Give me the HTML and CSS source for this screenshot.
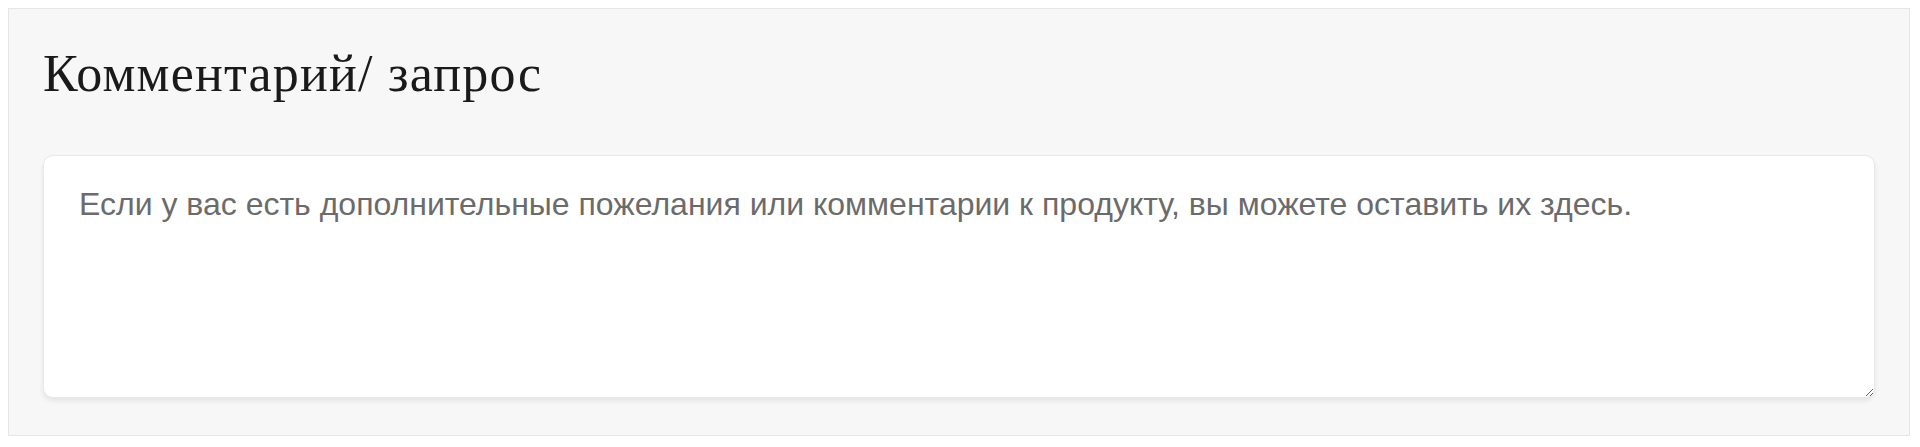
FILE: index.html
```html
<!DOCTYPE html>
<html lang="ru">
<head>
    <meta charset="UTF-8">
    <meta name="viewport" content="width=device-width, initial-scale=1.0">
    <title>Комментарий</title>
    <link rel="stylesheet" href="styles.css">
</head>
<body>

    <!-- Comment block -->
    <div class="comment-box">
        <h2 class="comment-title">Комментарий/ запрос</h2>
        <textarea class="comment-field" placeholder="Если у вас есть дополнительные пожелания или комментарии к продукту, вы можете оставить их здесь."></textarea>
    </div>

</body>
</html>
```

FILE: styles.css
```css
body {
    margin: 0;
    padding: 8px 10px 0 8px;
    background-color: #ffffff;
    font-family: "Liberation Sans", Arial, sans-serif;
}

/* Comment block */
.comment-box {
    display: flex;
    flex-direction: column;
    height: 428px;
    box-sizing: border-box;
    padding: 0 34px 37px 34px;
    background-color: #f7f7f7;
    border: 1px solid #e6e6e6;
}

.comment-title {
    margin: 0;
    padding: 34px 0 50px 0;
    font-family: "Liberation Serif", "Times New Roman", serif;
    font-size: 52px;
    font-weight: normal;
    letter-spacing: 1.2px;
    line-height: 1.2;
    color: #1a1a1a;
}

.comment-field {
    flex: 1;
    box-sizing: border-box;
    width: 100%;
    padding: 30px 35px;
    font-family: "Liberation Sans", Arial, sans-serif;
    font-size: 32px;
    color: #333;
    background-color: #ffffff;
    border: 1px solid #e9e9e9;
    border-radius: 10px;
    box-shadow: 0 3px 5px rgba(0, 0, 0, 0.08);
    outline: none;
}

.comment-field::placeholder {
    color: #6b6b6b;
}
```
